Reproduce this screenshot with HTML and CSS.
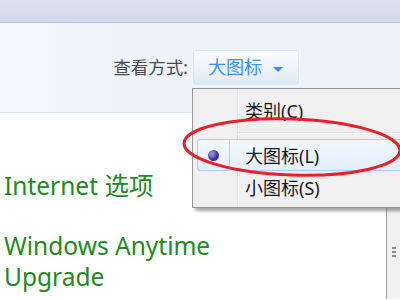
FILE: index.html
```html
<!DOCTYPE html>
<html lang="zh-CN">
<head>
    <meta charset="UTF-8">
    <title>控制面板</title>
    <link rel="stylesheet" href="styles.css">
</head>
<body>

    <div class="window">
        <div class="titlebar"></div>

        <div class="toolbar">
            <span class="viewby">查看方式:</span>
            <div class="viewbtn">大图标 <span class="arrow"></span></div>
        </div>

        <div class="main">
            <div class="items">
                <div class="item first">Internet 选项</div>
                <div class="item">Windows Anytime<br>Upgrade</div>
            </div>
            <div class="scroll">
                <div class="grip"><i></i><i></i><i></i></div>
            </div>
        </div>

        <!-- 下拉菜单 -->
        <div class="menu">
            <div class="menu-item"><span class="check"></span><span class="label">类别(C)</span></div>
            <div class="menu-sep"></div>
            <div class="menu-item active"><span class="check"><span class="dot"></span></span><span class="label">大图标(L)</span></div>
            <div class="menu-item"><span class="check"></span><span class="label">小图标(S)</span></div>
        </div>

        <svg class="circle" width="400" height="300" viewBox="0 0 400 300">
            <ellipse cx="292" cy="147" rx="108" ry="28" fill="none" stroke="#e8202a" stroke-width="3" transform="rotate(2 292 147)"/>
        </svg>
    </div>

</body>
</html>
```

FILE: styles.css
```css
body {
    margin: 0;
    font-family: "Noto Sans", "Noto Sans CJK SC", sans-serif;
    background: #fff;
}
.window {
    position: relative;
    width: 400px;
    height: 300px;
    overflow: hidden;
}
.titlebar {
    height: 22px;
    background: linear-gradient(#dde1f1, #d3d9ec);
    border-bottom: 1px solid #bfc4d2;
}
.toolbar {
    height: 90px;
    display: flex;
    justify-content: flex-end;
    align-items: flex-start;
    padding-top: 27px;
    padding-right: 101px;
    box-sizing: border-box;
    background: linear-gradient(to right, #f5f7fb, #eef3fb 30%);
    border-bottom: 1px solid #d5e5f5;
}
.viewby {
    font-size: 17.5px;
    color: #4a4a4a;
    line-height: 35px;
    margin-right: 5px;
}
.viewbtn {
    width: 106px;
    height: 35px;
    box-sizing: border-box;
    padding-left: 14px;
    border: 1px solid #dde6f2;
    border-radius: 3px;
    background: linear-gradient(#fbfdff, #e2eaf7);
    color: #3b8ef4;
    font-size: 18px;
    line-height: 32px;
}
.arrow {
    display: inline-block;
    width: 0;
    height: 0;
    margin-left: 6px;
    vertical-align: middle;
    border-left: 5px solid transparent;
    border-right: 5px solid transparent;
    border-top: 5px solid #3b8ef4;
}
.main {
    display: flex;
    height: 186px;
}
.items {
    flex: 1;
    padding-left: 4px;
    padding-top: 57px;
}
.item {
    color: #218a21;
    font-size: 24.5px;
    line-height: 31px;
    margin-bottom: 29px;
}
.scroll {
    width: 13px;
    border-left: 1px solid #a0a0a0;
    background: #f0f0f0;
    padding-top: 134px;
}
.grip {
    display: flex;
    flex-direction: column;
    gap: 2px;
    margin-left: 5px;
}
.grip i {
    display: block;
    width: 4px;
    height: 2px;
    background: #8a8a8a;
}
.menu {
    position: absolute;
    left: 192px;
    top: 88px;
    width: 230px;
    padding: 5px 0 4px 4px;
    border: 1px solid #979797;
    background: #f0f0f0 linear-gradient(to right, transparent 44px, #e0e0e0 44px, #e0e0e0 45px, #fff 45px, #fff 46px, transparent 46px);
    box-shadow: 3px 3px 3px rgba(0,0,0,0.35);
}
.menu-item {
    display: flex;
    align-items: center;
    height: 32px;
    box-sizing: border-box;
    border: 1px solid transparent;
    border-radius: 3px;
    font-size: 18px;
    color: #1a1a1a;
}
.menu-item .check {
    width: 31px;
    height: 100%;
    display: flex;
    align-items: center;
    justify-content: center;
    border-right: 1px solid transparent;
}
.menu-item .label {
    padding-left: 15px;
}
.menu-item.active {
    border-color: #aecff7;
    background: linear-gradient(#f2f8fe, #e3eefc);
}
.menu-item.active .check {
    border-right-color: #aecff7;
}
.dot {
    width: 11px;
    height: 11px;
    border-radius: 50%;
    background: radial-gradient(circle at 35% 35%, #a0a0ee, #3a3aa0 55%, #22226a);
}
.menu-sep {
    height: 13px;
    margin-left: 41px;
    background: linear-gradient(transparent 6px, #e0e0e0 6px, #e0e0e0 7px, #fff 7px, #fff 8px, transparent 8px);
}
.circle {
    position: absolute;
    left: 0;
    top: 0;
    pointer-events: none;
}
```
